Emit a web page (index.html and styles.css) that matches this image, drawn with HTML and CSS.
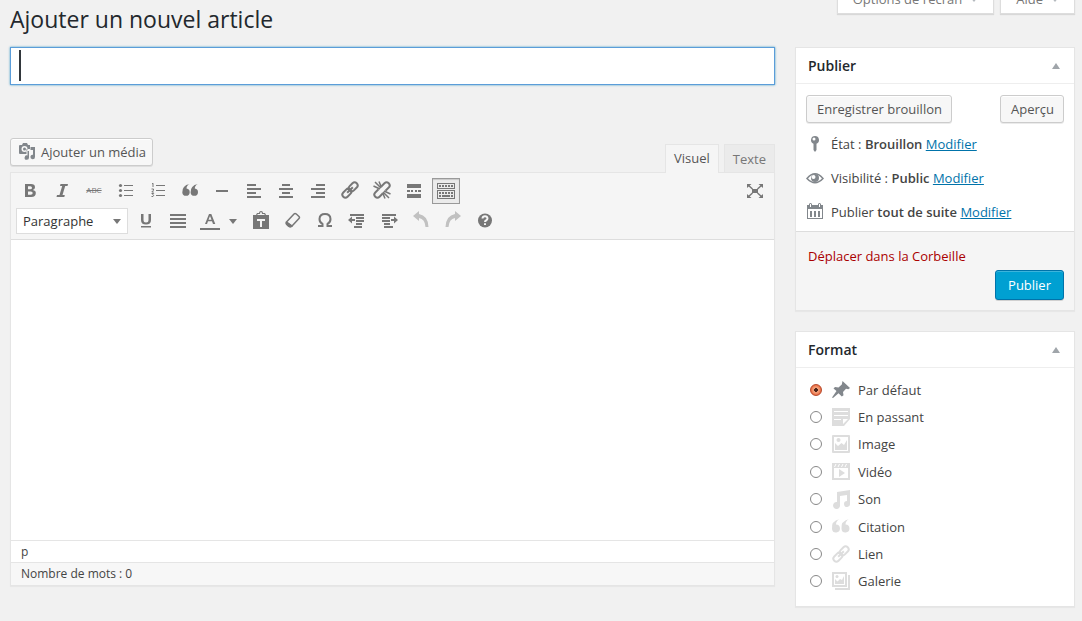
FILE: index.html
```html
<!DOCTYPE html>
<html lang="fr">
<head>
<meta charset="utf-8">
<meta name="viewport" content="width=device-width, initial-scale=1">
<title>Ajouter un nouvel article</title>
<link rel="stylesheet" href="styles.css">
</head>
<body>
<header class="page-head">
  <h1 class="page-title">Ajouter un nouvel article</h1>
  <div class="screen-links">
    <button class="screen-link" type="button">Options de l’écran <span class="caret caret-light"></span></button>
    <button class="screen-link" type="button">Aide <span class="caret caret-light"></span></button>
  </div>
</header>

<form class="columns">
  <main class="main">
    <input class="title-input" type="text" aria-label="Titre de l’article">

    <div class="editor-tools">
      <button class="button media-button" type="button">
        <svg class="icon" viewBox="0 0 20 20"><path fill-rule="evenodd" d="M3 3h2l1-2h4l1 2h2v4H9.500v5H3q-1 0-1-1V4q0-1 1-1zm4.500 1a3 3 0 1 0 0 6 3 3 0 0 0 0-6zm0 1.500a1.500 1.500 0 1 1 0 3 1.500 1.500 0 0 1 0-3z"/><path d="M13.500 5H18v10a2.300 2.300 0 1 1-2-2.300V8h-2.500z"/><path d="M10.500 9H12v6.500a2.200 2.200 0 1 1-1.500-2z"/></svg>
        Ajouter un média
      </button>
      <div class="editor-tabs">
        <button class="editor-tab is-active" type="button">Visuel</button>
        <button class="editor-tab" type="button">Texte</button>
      </div>
    </div>

    <section class="editor">
      <div class="toolbar">
        <div class="tool-row">
          <button class="tool" type="button" aria-label="Gras"><svg class="icon" viewBox="0 0 20 20"><path fill-rule="evenodd" d="M5 4h6q4 0 4 3.300 0 2.200-2.200 2.800Q15.800 10.700 15.800 13q0 4-4.500 4H5zm3 2.200v3h2.300q1.700 0 1.700-1.500T10.300 6.200zm0 5.200v3.400h2.800q1.900 0 1.900-1.700t-1.900-1.700z"/></svg></button>
          <button class="tool" type="button" aria-label="Italique"><svg class="icon" viewBox="0 0 20 20"><path d="M8.500 4H16l-.5 2h-2.300l-2.700 9h2.300l-.5 2H4.500l.5-2h2.500l2.700-9H8z"/></svg></button>
          <button class="tool strike-tool" type="button" aria-label="Barré">ABC</button>
          <button class="tool" type="button" aria-label="Liste à puces"><svg class="icon" viewBox="0 0 20 20"><circle cx="4.500" cy="5.500" r="1.600"/><circle cx="4.500" cy="10.500" r="1.600"/><circle cx="4.500" cy="15.500" r="1.600"/><path d="M8 5h9v1H8zm0 5h9v1H8zm0 5h9v1H8z"/></svg></button>
          <button class="tool" type="button" aria-label="Liste numérotée"><svg class="icon" viewBox="0 0 20 20"><path class="stroke thin" d="M4 4l1-.8V7M3.500 9h2v1.200L3.800 12h2M3.500 13.500h2.200l-1 1.200 1 .8-.7 1H3.500"/><path d="M8 5h9v1H8zm0 5h9v1H8zm0 5h9v1H8z"/></svg></button>
          <button class="tool" type="button" aria-label="Citation"><svg class="icon" viewBox="0 0 20 20"><path d="M9.500 4Q6.500 5.500 6.500 8.500A3.700 3.700 0 1 1 2.300 12.500Q2 5.500 9.500 4zM17.800 4q-3 1.500-3 4.500a3.700 3.700 0 1 1-4.200 4Q10.300 5.500 17.800 4z"/></svg></button>
          <button class="tool" type="button" aria-label="Ligne horizontale"><svg class="icon" viewBox="0 0 20 20"><path d="M4 10h12v2H4z"/></svg></button>
          <button class="tool" type="button" aria-label="Aligner à gauche"><svg class="icon" viewBox="0 0 20 20"><path d="M3 4h9v2H3zm0 4h14v2H3zm0 4h9v2H3zm0 4h14v2H3z"/></svg></button>
          <button class="tool" type="button" aria-label="Centrer"><svg class="icon" viewBox="0 0 20 20"><path d="M6 4h8v2H6zM3 8h14v2H3zm3 4h8v2H6zm-3 4h14v2H3z"/></svg></button>
          <button class="tool" type="button" aria-label="Aligner à droite"><svg class="icon" viewBox="0 0 20 20"><path d="M8 4h9v2H8zM3 8h14v2H3zm5 4h9v2H8zm-5 4h14v2H3z"/></svg></button>
          <button class="tool" type="button" aria-label="Insérer un lien"><svg class="icon" viewBox="0 0 20 20"><g class="stroke" transform="rotate(-45 10 10)"><rect x="0.500" y="7" width="10" height="6" rx="3"/><rect x="9.500" y="7" width="10" height="6" rx="3"/><path d="M6 10h8"/></g></svg></button>
          <button class="tool" type="button" aria-label="Retirer le lien"><svg class="icon" viewBox="0 0 20 20"><g class="stroke" transform="rotate(-45 10 10)"><path d="M8 7H3.500a3 3 0 0 0 0 6H8M12 7h4.500a3 3 0 0 1 0 6H12"/></g><path class="stroke slim" d="M9 8L3 2m5 7L1.500 6M9.500 7.500L7 1.500M11 12l6 6m-5-7l6.500 3M10.500 12.500l2.500 6"/></svg></button>
          <button class="tool" type="button" aria-label="Balise Lire la suite"><svg class="icon" viewBox="0 0 20 20"><path d="M3 4h14v4H3zm0 6h3v2H3zm4 0h2v2H7zm4 0h2v2h-2zm3 0h3v2h-3zM3 14h14v4H3z"/></svg></button>
          <button class="tool is-pressed" type="button" aria-label="Ouvrir ou fermer la barre d’outils" aria-pressed="true"><svg class="icon" viewBox="0 0 20 20"><path fill-rule="evenodd" d="M1 3h18v6H1zm1 1v4h16V4zm-1 6h18v9H1zm1 1v7h16v-7z"/><path d="M3 5h2v2H3zm3 0h2v2H6zm3 0h2v2H9zm3 0h2v2h-2zm3 0h2v2h-2zM3 12h2v2H3zm3 0h2v2H6zm3 0h2v2H9zm3 0h2v2h-2zm3 0h2v2h-2zM3 15h2v2H3zm3 0h8v2H6zm9 0h2v2h-2z"/></svg></button>
          <button class="tool tool-end" type="button" aria-label="Plein écran"><svg class="icon" viewBox="0 0 20 20"><path d="M7 9h6v4H7zM2 4h4.500L2 8zm16 0v4l-4.500-4zM2 18v-4l4.500 4zm16 0h-4.500l4.500-4z"/><path class="stroke slim" d="M3 5l4.500 4M17 5l-4.500 4M3 17l4.500-4m9.500 4l-4.500-4"/></svg></button>
        </div>
        <div class="tool-row">
          <button class="format-select" type="button" aria-haspopup="listbox">Paragraphe <span class="caret"></span></button>
          <button class="tool" type="button" aria-label="Souligné"><svg class="icon" viewBox="0 0 20 20"><path d="M5 4h2.500v6q0 2.500 2.500 2.500t2.500-2.500V4H15v6q0 4.500-5 4.500T5 10zm0 12h10v1.500H5z"/></svg></button>
          <button class="tool" type="button" aria-label="Justifier"><svg class="icon" viewBox="0 0 20 20"><path d="M2 4h16v2H2zm0 4h16v2H2zm0 4h16v2H2zm0 4h16v2H2z"/></svg></button>
          <div class="split-tool">
            <button class="tool" type="button" aria-label="Couleur du texte"><svg class="icon" viewBox="0 0 20 20"><path fill-rule="evenodd" d="M9 4h2.300l4 10H13l-1-2.700H8L7 14H5zm1 2L8.500 9.700h3zM0 18h20v2H0z"/></svg></button>
            <button class="tool tool-narrow" type="button" aria-label="Choisir une couleur"><span class="caret"></span></button>
          </div>
          <button class="tool" type="button" aria-label="Coller en texte"><svg class="icon" viewBox="0 0 20 20"><path fill-rule="evenodd" d="M2 5h3l1-2h2q0-2 2-2t2 2h2l1 2h3v14H2zm4 0h8l-1-1h-2q0-2-1-2T9 4H7zm0 4v2h3v6h2v-6h3V9z"/></svg></button>
          <button class="tool" type="button" aria-label="Effacer la mise en forme"><svg class="icon" viewBox="0 0 20 20"><path class="stroke slim" d="M3.500 12L11 4q1-1 2-.2l3 2.700q1 1 0 2L9 16zM3.500 12q-1 1 0 2.200l2 2q1.500 1 3.500-.2"/><path d="M3.500 11.500L10 16q-2 2.500-4.500.5l-2-2q-1.500-1.500 0-3z"/></svg></button>
          <button class="tool" type="button" aria-label="Caractère spécial"><svg class="icon" viewBox="0 0 20 20"><path class="stroke" d="M3 16h4.500v-2Q4.500 12.500 4.500 9 4.700 4 10 4t5.500 5q0 3.500-3 5v2H17"/></svg></button>
          <button class="tool" type="button" aria-label="Diminuer le retrait"><svg class="icon" viewBox="0 0 20 20"><path d="M3 4h14v2H3zm6 3h8v2H9zm0 3h8v2H9zm0 3h6v2H9zm-2 3h8v2H7zM1 10l4-3.500V9h3v2H5v2.500z"/></svg></button>
          <button class="tool" type="button" aria-label="Augmenter le retrait"><svg class="icon" viewBox="0 0 20 20"><path d="M3 4h14v2H3zm0 3h8v2H3zm0 3h8v2H3zm2 3h6v2H5zm0 3h9v2H5zm14-6l-4-3.500V9h-3v2h3v2.500z"/></svg></button>
          <button class="tool is-off" type="button" aria-label="Annuler" disabled><svg class="icon" viewBox="0 0 20 20"><path d="M8 1v3q9 1.500 9.500 13h-3Q14 9 8 8v3L2 6z"/></svg></button>
          <button class="tool is-off" type="button" aria-label="Rétablir" disabled><svg class="icon" viewBox="0 0 20 20"><path d="M12 1v3Q3 5.500 2.500 17h3Q6 9 12 8v3l6-5z"/></svg></button>
          <button class="tool" type="button" aria-label="Aide au clavier"><svg class="icon" viewBox="0 0 20 20"><circle cx="10" cy="10.500" r="7"/><path class="help-mark" d="M7.500 8.500q.2-2.300 2.500-2.300t2.500 2.300q0 1.200-1.500 2-1 .5-1 1.500m0 1.300V15"/></svg></button>
        </div>
      </div>
      <textarea class="editor-area" aria-label="Contenu"></textarea>
      <div class="path-bar">p</div>
      <div class="status-bar">Nombre de mots : 0</div>
    </section>
  </main>

  <aside class="side">
    <section class="box">
      <header class="box-head"><h2 class="box-title">Publier</h2><button class="box-toggle" type="button" aria-label="Replier Publier"></button></header>
      <div class="draft-actions">
        <button class="button" type="button">Enregistrer brouillon</button>
        <button class="button" type="button">Aperçu</button>
      </div>
      <ul class="publish-list">
        <li class="publish-item"><svg class="icon" viewBox="0 0 20 20"><path fill-rule="evenodd" d="M10 2a4 4 0 0 1 1.500 7.700V16L10 18l-1.500-2V9.700A4 4 0 0 1 10 2zM9 3.500a1.500 1.500 0 1 0 0 3 1.500 1.500 0 0 0 0-3z"/></svg><span>État : <b>Brouillon</b> <a class="link" href="#">Modifier</a></span></li>
        <li class="publish-item"><svg class="icon" viewBox="0 0 20 20"><path class="stroke slim" d="M2 10.500Q10 1 18 10.500 10 19 2 10.500z"/><path fill-rule="evenodd" d="M10 6a4 4 0 1 1 0 8 4 4 0 0 1 0-8zM8.500 7a2 2 0 1 0 0 4 2 2 0 0 0 0-4z"/></svg><span>Visibilité : <b>Public</b> <a class="link" href="#">Modifier</a></span></li>
        <li class="publish-item"><svg class="icon" viewBox="0 0 20 20"><path fill-rule="evenodd" d="M2 3h2V2q1.500-2 3 0v1h6V2q1.500-2 3 0v1h2v14H2zm1 4v9h14V7zM5 2v3h1V2zm9 0v3h1V2z"/><path d="M5 9h2v6H5zm4 0h2v6H9zm4 0h2v6h-2z"/></svg><span>Publier <b>tout de suite</b> <a class="link" href="#">Modifier</a></span></li>
      </ul>
      <footer class="publish-foot">
        <a class="trash" href="#">Déplacer dans la Corbeille</a>
        <button class="button button-primary" type="submit">Publier</button>
      </footer>
    </section>

    <section class="box">
      <header class="box-head"><h2 class="box-title">Format</h2><button class="box-toggle" type="button" aria-label="Replier Format"></button></header>
      <div class="formats">
        <label class="format"><input class="radio" type="radio" name="format" checked><svg class="icon icon-dark" viewBox="0 0 20 20"><path d="M11.500 1l7.500 7-1.700 1.200-2.300-.4-3 3.200.5 3.300-1.700 1.200-3.300-3.300L2 18l-1-.5L5.500 11 2.500 8.500 4 7l3.500.4 3.300-3z"/></svg>Par défaut</label>
        <label class="format"><input class="radio" type="radio" name="format"><svg class="icon" viewBox="0 0 20 20"><path fill-rule="evenodd" d="M1 1h18v11l-6 7H1zm2 3v1h14V4zm0 4v1h14V8zm0 4v1h7v-1zm9 0v5l5-5z"/></svg>En passant</label>
        <label class="format"><input class="radio" type="radio" name="format"><svg class="icon" viewBox="0 0 20 20"><path fill-rule="evenodd" d="M2 1h16q1 0 1 1v16q0 1-1 1H2q-1 0-1-1V2q0-1 1-1zm1 2v14h14V3z"/><path d="M4 16V9l3 3 3.500-3 2.500 2 3-5v10z"/><circle cx="7.500" cy="6" r="2"/></svg>Image</label>
        <label class="format"><input class="radio" type="radio" name="format"><svg class="icon" viewBox="0 0 20 20"><path fill-rule="evenodd" d="M1 1h18v17H1zm2 5v10h14V6zm1-1l1.500-3h-1L3 5zm3.500 0L9 2H8L6.500 5zM11 5l1.500-3h-1L10 5zm3.500 0L16 2h-1l-1.500 3z"/><path d="M8 7l6 4-6 4z"/></svg>Vidéo</label>
        <label class="format"><input class="radio" type="radio" name="format"><svg class="icon" viewBox="0 0 20 20"><path d="M6 3l13-2v13.500a3 3 0 1 1-3-2.500V6L9 7v9a3.500 3.500 0 1 1-3-3z"/></svg>Son</label>
        <label class="format"><input class="radio" type="radio" name="format"><svg class="icon" viewBox="0 0 20 20"><path d="M8.500 2Q5 4 5 7.500A4 4 0 1 1 1 12Q0 4 8.500 2zM18 2q-3.500 2-3.500 5.500a4 4 0 1 1-4 4.500Q9.500 4 18 2z"/></svg>Citation</label>
        <label class="format"><input class="radio" type="radio" name="format"><svg class="icon" viewBox="0 0 20 20"><g class="stroke" transform="rotate(-45 10 10)"><rect x="0.500" y="7" width="10" height="6" rx="3"/><rect x="9.500" y="7" width="10" height="6" rx="3"/><path d="M6 10h8"/></g></svg>Lien</label>
        <label class="format"><input class="radio" type="radio" name="format"><svg class="icon" viewBox="0 0 20 20"><path fill-rule="evenodd" d="M1 1h15v15H1zm2 2v11h11V3z"/><path d="M4 13V8l2.500 2.500L9 8l2 1 2-4v8zM17 4h2v15H4v-2h13z"/><circle cx="6" cy="5.500" r="1.500"/></svg>Galerie</label>
      </div>
    </section>
  </aside>
</form>
</body>
</html>
```

FILE: styles.css
```css
* { box-sizing: border-box; }

body {
  margin: 0;
  padding: 0 7px 14px 10px;
  background: #f1f1f1;
  color: #444;
  font: 13px/20px "Open Sans", sans-serif;
}

button, input, textarea { font: inherit; color: inherit; }
button { margin: 0; padding: 0; border: 0; background: none; }

.page-head { display: flex; justify-content: space-between; align-items: flex-start; min-height: 47px; }
.page-title { margin: 0; padding-top: 3px; color: #23282d; font-size: 23px; font-weight: 400; line-height: 32px; }
.screen-links { display: flex; gap: 6px; margin-top: -14px; }
.screen-link {
  display: flex; align-items: center; gap: 8px;
  height: 28px; padding: 0 15px 2px;
  border: 1px solid #ddd; background: #fff; color: #777;
  box-shadow: 0 1px 1px rgba(0, 0, 0, .1);
}

.caret { border: 4px solid transparent; border-top: 5px solid #777; border-bottom: 0; }
.caret-light { border-top-color: #b4b9be; }

.columns { display: grid; grid-template-columns: minmax(0, 1fr) 280px; gap: 20px; align-items: start; }

.title-input {
  display: block; width: 100%; height: 38px; padding: 3px 8px;
  border: 1px solid #5b9dd9; outline: 0;
  background: linear-gradient(#32373c, #32373c) 8px 2px / 2px 31px no-repeat #fff;
  box-shadow: 0 0 2px rgba(30, 140, 190, .8);
  font-size: 22px;
}

.icon { display: block; flex: none; width: 20px; height: 20px; fill: currentColor; }
.stroke { fill: none; stroke: currentColor; stroke-width: 2; }
.thin { stroke-width: 1; }
.slim { stroke-width: 1.5; }

.button {
  height: 28px; padding: 0 9px 0 10px;
  border: 1px solid #ccc; border-radius: 3px;
  background: #f7f7f7; color: #555;
  box-shadow: inset 0 1px 0 #fff, 0 1px 0 rgba(0, 0, 0, .08);
  line-height: 26px;
}
.button-primary {
  height: 30px; padding: 0 12px;
  border-color: #0073aa; background: #00a0d2; color: #fff;
  box-shadow: inset 0 1px 0 rgba(120, 200, 230, .5), 0 1px 0 rgba(0, 0, 0, .15);
}

.editor-tools { display: flex; justify-content: space-between; align-items: flex-end; margin-top: 53px; }
.media-button { display: flex; align-items: center; gap: 4px; margin-bottom: 6px; padding: 0 6px; }
.media-button .icon { color: #82878c; }
.editor-tabs { display: flex; gap: 5px; }
.editor-tab {
  position: relative; height: 28px; padding: 0 8px;
  border: 1px solid #e5e5e5; border-bottom: 0;
  background: #ebebeb; color: #777;
}
.editor-tab.is-active { height: 29px; margin-bottom: -1px; padding-bottom: 2px; background: #f5f5f5; color: #555; }

.editor { border: 1px solid #e5e5e5; background: #fff; box-shadow: 0 1px 1px rgba(0, 0, 0, .04); }
.toolbar { display: grid; gap: 4px; padding: 5px; border-bottom: 1px solid #ddd; background: #f5f5f5; }
.tool-row { display: flex; gap: 4px; }
.tool { display: flex; align-items: center; justify-content: center; width: 28px; height: 26px; padding-bottom: 2px; color: #777; }
.tool.is-pressed { border: 1px solid #999; background: #ebebeb; box-shadow: inset 0 1px 1px rgba(0, 0, 0, .15); }
.tool-end { margin-left: auto; }
.tool-narrow { width: 19px; padding: 0 1px 0 0; }
.tool.is-off { color: #c1c1c1; }
.strike-tool { font-size: 8px; text-decoration: line-through; }
.split-tool { display: flex; }
.help-mark { fill: none; stroke: #f5f5f5; stroke-width: 2; }
.format-select {
  display: flex; align-items: center; justify-content: space-between;
  width: 112px; height: 26px; padding: 0 6px;
  border: 1px solid #ddd; background: #fff; color: #333;
}
.editor-area { display: block; width: 100%; height: 300px; padding: 10px; border: 0; outline: 0; resize: none; }
.path-bar, .status-bar { padding: 0 10px; border-top: 1px solid #e5e5e5; font-size: 12px; line-height: 21px; }
.status-bar { background: #f7f7f7; line-height: 22px; }

.side { display: grid; gap: 20px; }
.box { border: 1px solid #e5e5e5; background: #fff; box-shadow: 0 1px 1px rgba(0, 0, 0, .04); }
.box-head {
  display: flex; align-items: center; justify-content: space-between;
  height: 36px; padding: 0 12px; border-bottom: 1px solid #eee;
}
.box-title { margin: 0; color: #23282d; font-size: 14px; font-weight: 600; line-height: 20px; }
.box-toggle { margin-right: 2px; border: 4px solid transparent; border-top: 0; border-bottom: 6px solid #a0a5aa; }

.draft-actions { display: flex; justify-content: space-between; padding: 11px 10px 4px; }
.publish-list { margin: 0; padding: 0 9px 2px; list-style: none; }
.publish-item { display: flex; align-items: center; gap: 6px; height: 34px; }
.publish-item .icon { color: #82878c; }
.publish-item b { font-weight: 600; }
.link { color: #0073aa; }
.publish-foot {
  display: flex; flex-direction: column; align-items: flex-start; gap: 4px;
  padding: 14px 10px 10px; border-top: 1px solid #ddd; background: #f5f5f5;
}
.trash { padding-left: 2px; color: #a00; text-decoration: none; }
.publish-foot .button { align-self: flex-end; }

.formats { display: flex; flex-direction: column; justify-content: space-between; min-height: 238px; padding: 8px 14px 11px; }
.format { display: flex; align-items: center; height: 27px; }
.format .icon { margin: 0 7px 0 9px; color: #ddd; }
.format .icon-dark { color: #82878c; }
.radio {
  flex: none; width: 12px; height: 12px; margin: 0;
  appearance: none; border: 1px solid #888; border-radius: 50%; background: #fff;
}
.radio:checked { border-color: #b6492b; background: radial-gradient(circle, #4a251a 0 2px, #f09a74 2px 3px, #e9693f 5px); }
```
